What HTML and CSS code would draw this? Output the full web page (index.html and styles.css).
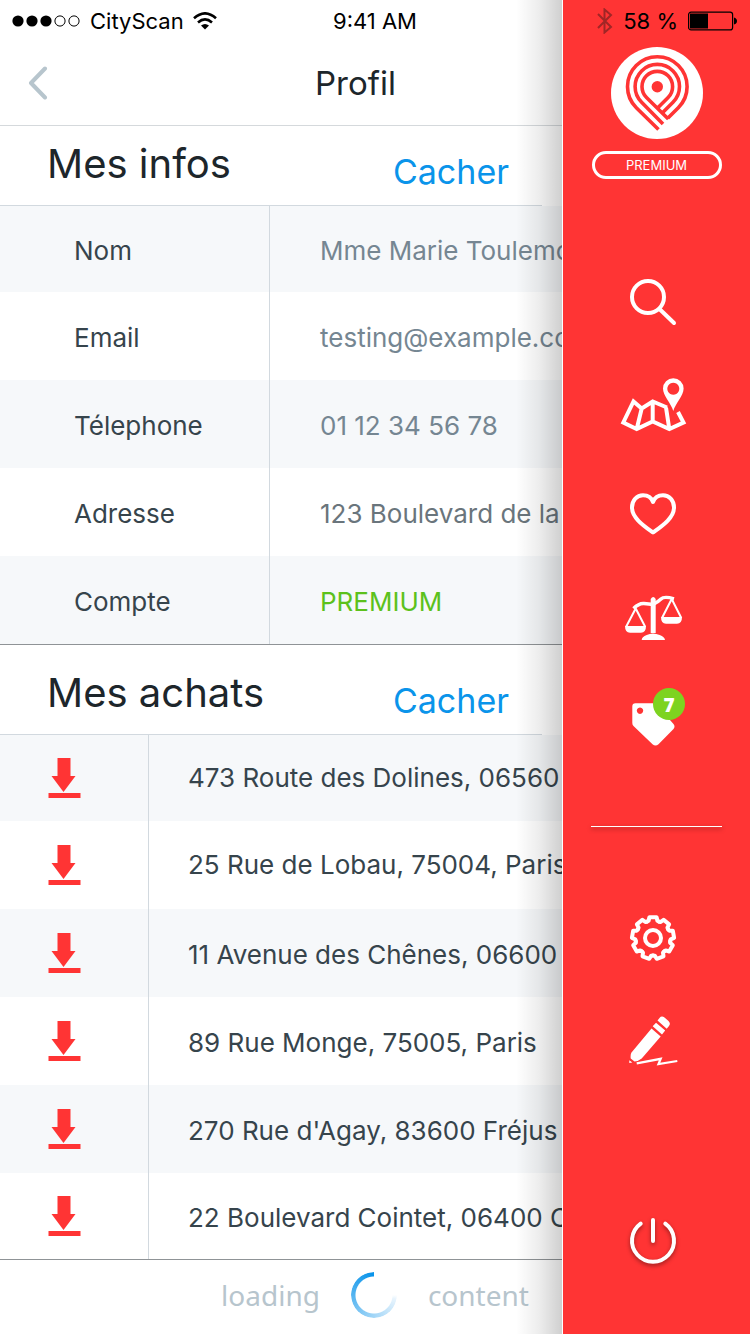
FILE: index.html
```html
<!DOCTYPE html>
<html lang="fr">
<head>
<meta charset="utf-8">
<meta name="viewport" content="width=device-width, initial-scale=1">
<title>CityScan – Profil</title>
<link rel="stylesheet" href="styles.css">
</head>
<body>
<svg class="defs" aria-hidden="true">
  <symbol id="download" viewBox="0 0 32 40"><path fill="#ff3434" d="M9 0h13v18h5L15 34 3 18h6zM0 35h32v5H0z"/></symbol>
  <path id="tooth" d="M-6 -16.4L-4.4 -17.2L-3.6 -20.8H3.6L4.4 -17.2L6 -16.4"/>
</svg>
<div class="app">
  <div class="status">
    <div class="status-left">
      <svg width="69" height="12" viewBox="0 0 69 12"><circle cx="6" cy="6" r="5.6"/><circle cx="20" cy="6" r="5.6"/><circle cx="34" cy="6" r="5.6"/><g fill="none" stroke="#000"><circle cx="48" cy="6" r="5.1"/><circle cx="62" cy="6" r="5.1"/></g></svg>
      <span>CityScan</span>
      <svg width="24" height="18" viewBox="0 0 24 18"><g fill="none" stroke="#000" stroke-width="2.6"><path d="M1 6.3Q12 -3.6 23 6.3"/><path d="M5 10.5Q12 4.4 19 10.5"/></g><path d="M8 13.5Q12 10.4 16 13.5L12 17.6z"/></svg>
    </div>
    <span>9:41 AM</span>
    <div class="status-right">
      <svg width="16" height="26" viewBox="0 0 16 26"><path d="M1 6l13 13-6.500 5.500V1.500L14 7 1 20" fill="none" stroke="#a02626" stroke-width="2"/></svg>
      <span>58 %</span>
      <svg width="50" height="20" viewBox="0 0 50 20"><rect x=".6" y="1.100" width="44" height="17.800" rx="2.500" fill="none" stroke="#000" stroke-width="1.200"/><path d="M2 2.500h18v15H2zM46 6.500q3 1 3 3.500t-3 3.500z"/></svg>
    </div>
  </div>

  <main class="content">
    <header class="topbar">
      <button class="back" aria-label="Retour"><svg width="20" height="34" viewBox="0 0 20 34"><path d="M17 2.500L3 17 17 31.500" fill="none" stroke="#b7c5cd" stroke-width="4" stroke-linecap="round" stroke-linejoin="round"/></svg></button>
      <h1>Profil</h1>
    </header>

    <section>
      <div class="section-head first"><h2>Mes infos</h2><button class="toggle">Cacher</button></div>
      <table class="infos">
        <tbody>
          <tr><th scope="row">Nom</th><td>Mme Marie Toulemonde</td></tr>
          <tr><th scope="row">Email</th><td>testing@example.com</td></tr>
          <tr><th scope="row">Télephone</th><td>01 12 34 56 78</td></tr>
          <tr><th scope="row">Adresse</th><td class="grey">123 Boulevard de la</td></tr>
          <tr><th scope="row">Compte</th><td class="premium">PREMIUM</td></tr>
        </tbody>
      </table>
    </section>

    <section>
      <div class="section-head"><h2>Mes achats</h2><button class="toggle">Cacher</button></div>
      <table class="achats">
        <tbody>
          <tr><th><button aria-label="Télécharger"><svg><use href="#download"/></svg></button></th><td>473 Route des Dolines, 06560</td></tr>
          <tr><th><button aria-label="Télécharger"><svg><use href="#download"/></svg></button></th><td>25 Rue de Lobau, 75004, Paris</td></tr>
          <tr><th><button aria-label="Télécharger"><svg><use href="#download"/></svg></button></th><td>11 Avenue des Chênes, 06600</td></tr>
          <tr><th><button aria-label="Télécharger"><svg><use href="#download"/></svg></button></th><td>89 Rue Monge, 75005, Paris</td></tr>
          <tr><th><button aria-label="Télécharger"><svg><use href="#download"/></svg></button></th><td>270 Rue d'Agay, 83600 Fréjus</td></tr>
          <tr><th><button aria-label="Télécharger"><svg><use href="#download"/></svg></button></th><td>22 Boulevard Cointet, 06400 C</td></tr>
        </tbody>
      </table>
    </section>

    <footer class="loading"><span>loading</span><span class="spinner"></span><span>content</span></footer>
  </main>

  <aside class="sidebar">
    <svg class="logo" viewBox="0 0 92 92">
      <circle cx="46" cy="46" r="46" fill="#fff"/>
      <circle cx="46.300" cy="39.700" r="5.700" fill="#ff3434"/>
      <g fill="none" stroke="#ff3434" stroke-width="3.600">
        <path d="M47.500 82.500L25.300 60.700A29.800 29.800 0 1 1 67.300 60.700L56.700 71.300"/>
        <path d="M52 77L30.600 55.300A22.200 22.200 0 1 1 62 55.300L51.500 65.800"/>
        <path d="M57.300 72L35.500 50.500A15.300 15.300 0 1 1 57.100 50.500L46.300 61.300"/>
      </g>
    </svg>
    <span class="plan">PREMIUM</span>
    <nav class="menu">
      <a href="#" aria-label="Rechercher"><svg viewBox="0 0 72 72"><g fill="none" stroke="#fff" stroke-width="4" stroke-linecap="round"><circle cx="31" cy="31" r="16"/><path d="M43 43.500L57 57"/></g></svg></a>
      <a href="#" aria-label="Carte"><svg viewBox="0 0 72 72"><path d="M50 35.500L35.700 29.500 24.700 36.500 16.500 29.500 6.300 50.500 19.700 57 35.700 49.500 52.300 57 66.500 50.500 61 40M24.700 36.500L19.700 57M35.700 29.500V49.500M49 35.500L52.300 57" fill="none" stroke="#fff" stroke-width="4"/><path fill="#fff" stroke="#ff3434" stroke-width="2" paint-order="stroke" fill-rule="evenodd" d="M56.300 39C54 31 46 24 46 16.500a10.300 10.300 0 0 1 20.600 0C66.600 24 58.600 31 56.300 39zM56.300 10.700a6 6 0 1 0 .01 0z"/></svg></a>
      <a href="#" aria-label="Favoris"><svg viewBox="0 0 72 72"><path d="M36 54.500C27 48 15 40 15 29.500C15 22 20 17.300 26 17.300C31 17.300 34.500 20 36 24C37.500 20 41 17.300 46 17.300C52 17.300 57 22 57 29.500C57 40 45 48 36 54.500z" fill="none" stroke="#fff" stroke-width="4" stroke-linejoin="round"/></svg></a>
      <a href="#" aria-label="Comparer"><svg viewBox="0 0 72 72"><path fill="#fff" d="M33.700 15q2.500-4 5 0v34h-5zM24.700 56q0-3 5-5 6-3 13 0 5 2 5.300 5zM8 42h21q0 6.700-5 6.700H13Q8 48.700 8 42zM44 33h21q0 6.700-5 6.700H49Q44 39.700 44 33z"/><g fill="none" stroke="#fff"><path stroke-width="3.400" d="M16.500 24.500Q22 19 27 19.500T36 20.500Q41 18 44 15T57 14.800"/><path stroke-width="2" d="M9 43L18.700 24.500 28.300 43M45 34L54.700 15 64.300 34"/></g></svg></a>
      <a href="#" aria-label="Achats"><svg viewBox="0 0 72 72"><path fill="#fff" fill-rule="evenodd" d="M18.500 13.300H36q2 0 3.500 1.500L56.500 34q2 2.500 0 5L41.500 54.300q-3 2.500-6 0L16.500 36q-1.200-1.200-1.200-3V16.500q0-3.200 3.200-3.200zM23 17.500a3.200 3.200 0 1 0 .01 0z"/></svg><span class="badge">7</span></a>
      <hr>
      <a href="#" aria-label="Réglages"><svg viewBox="0 0 72 72"><g transform="translate(36 36)" fill="none" stroke="#fff" stroke-width="4" stroke-linejoin="round" stroke-linecap="round"><circle r="8"/><use href="#tooth"/><use href="#tooth" transform="rotate(40)"/><use href="#tooth" transform="rotate(80)"/><use href="#tooth" transform="rotate(120)"/><use href="#tooth" transform="rotate(160)"/><use href="#tooth" transform="rotate(200)"/><use href="#tooth" transform="rotate(240)"/><use href="#tooth" transform="rotate(280)"/><use href="#tooth" transform="rotate(320)"/></g></svg></a>
      <a href="#" aria-label="Modifier"><svg viewBox="0 0 72 72"><path fill="#fff" d="M34.500 20.500L43.700 28.500 24.700 50.500Q21 53.500 17.500 53.500L13.700 50.500Q13.300 47 14.300 44.700zM35.700 18.300L39 14.700 48.200 22.600 45 26.500zM40.500 12.500L42.500 10Q44.500 7.500 47.500 9.500L51.500 13Q54 15.500 52 18L49.700 20.700zM12.300 52.300l3 2.200-3 .6z"/><path d="M19.700 55.300L43.700 50.800 41.500 56 60.300 53" fill="none" stroke="#fff" stroke-width="2.200"/></svg></a>
      <a href="#" class="power" aria-label="Déconnexion"><svg viewBox="0 0 72 72"><path d="M23.700 18.700A21 21 0 1 0 48.300 18.700M36 15V36" fill="none" stroke="#fff" stroke-width="4" stroke-linecap="round"/></svg></a>
    </nav>
  </aside>
</div>
</body>
</html>
```
FILE: styles.css
```css
* { box-sizing: border-box; }

body {
  margin: 0;
  background: #fff;
  color: #1d262b;
  font-family: Inter, "Liberation Sans", sans-serif;
}

button {
  padding: 0;
  border: 0;
  background: none;
  font: inherit;
  color: inherit;
  cursor: pointer;
}

svg { display: block; flex: none; }
.defs { position: absolute; width: 0; height: 0; }

.app {
  display: grid;
  grid-template-columns: minmax(0, 1fr) 187px;
  grid-template-rows: 40px auto;
  min-height: 100vh;
}

/* Status bar */
.status {
  grid-area: 1 / 1 / 2 / 3;
  z-index: 2;
  display: grid;
  grid-template-columns: 1fr auto 1fr;
  align-items: center;
  padding: 2px 12px 0;
  color: #000;
  font-size: 22px;
  line-height: 28px;
}
.status-left, .status-right { display: flex; align-items: center; gap: 9px; }
.status-right { justify-content: flex-end; gap: 10px; }

.content {
  grid-area: 1 / 1 / 3 / 2;
  display: flex;
  flex-direction: column;
  overflow: hidden;
  padding-top: 40px;
}

.topbar {
  display: flex;
  align-items: center;
  height: 86px;
  border-bottom: 1px solid #d5d9dc;
}
.back { width: 148px; padding-left: 28px; }
h1, h2 { margin: 0; font-weight: 400; }
h1 { flex: 1; font-size: 33px; line-height: 44px; text-align: center; }

/* Sections */
.section-head {
  display: flex;
  justify-content: space-between;
  height: 90px;
  padding: 20px 54px 0 47px;
  background: linear-gradient(#d2d9df, #d2d9df) 0 100% / calc(100% - 21px) 1px no-repeat;
}
.section-head.first { height: 80px; padding-top: 10px; }
h2 { font-size: 40px; line-height: 56px; }
.toggle { margin-top: 14px; align-self: flex-start; color: #0a94ea; font-size: 34px; line-height: 44px; }

table {
  width: 100%;
  table-layout: fixed;
  border-spacing: 0;
  border-bottom: 1px solid #8f9396;
  font-size: 26px;
  line-height: 36px;
  color: #36444c;
}
tr { height: 88px; }
tr:first-child { height: 86px; }
tr:nth-child(odd) { background: #f6f8fa; }
th, td { padding: 0; text-align: left; font-weight: 400; white-space: nowrap; }
td { border-left: 1px solid #d2d9df; }
.infos th { width: 269px; padding: 3px 0 0 74px; }
.infos td { padding: 3px 0 0 50px; color: #758692; }
.infos .grey { color: #6a757c; }
.infos .premium { color: #5cc11c; }
.achats th { width: 148px; padding-left: 48px; }
.achats td { padding-left: 39px; }
.achats tr:nth-child(n+3) td { padding-top: 3px; }
.achats tr:last-child { height: 86px; }
.achats button { display: block; }
.achats svg { width: 33px; height: 40px; }

.loading {
  flex: 1;
  display: flex;
  align-items: center;
  justify-content: center;
  gap: 31px;
  min-height: 70px;
  padding: 0 0 4px 187px;
  color: #b7c5cd;
  font: 28px/40px "Noto Sans", sans-serif;
}
.spinner {
  width: 46px;
  height: 46px;
  border-radius: 50%;
  background: conic-gradient(#fff 0 90deg, #e8f4fd 100deg, #0a94ea 355deg, #0a94ea);
  -webkit-mask: radial-gradient(circle, transparent 18px, #000 19px);
  mask: radial-gradient(circle, transparent 18px, #000 19px);
}

/* Sidebar */
.sidebar {
  grid-area: 1 / 2 / 3 / 3;
  position: relative;
  display: flex;
  flex-direction: column;
  align-items: center;
  padding-top: 47px;
  background: #ff3434;
}
.sidebar::before {
  content: "";
  position: absolute;
  top: 0;
  bottom: 0;
  right: 100%;
  width: 46px;
  border-right: 1px solid #fff;
  background: linear-gradient(to right, rgba(0, 0, 0, 0), rgba(0, 0, 0, .07) 50%, rgba(0, 0, 0, .19));
  background-clip: padding-box;
}
.logo { width: 92px; height: 92px; }
.plan {
  width: 130px;
  margin-top: 12px;
  padding-top: 1px;
  border: 3px solid #fff;
  border-radius: 14px;
  color: #fff;
  font-size: 13px;
  line-height: 21px;
  text-align: center;
}
.menu {
  flex: 1;
  display: flex;
  flex-direction: column;
  align-self: stretch;
  padding: 70px 0 40px;
}
.menu a {
  position: relative;
  display: block;
  width: 72px;
  margin-left: 54px;
  padding: 17px 0;
}
.menu svg { width: 72px; height: 72px; }
.menu hr {
  width: 131px;
  height: 1px;
  margin: 47px auto 58px;
  border: 0;
  background: #fff;
  box-shadow: 0 2px 4px rgba(0, 0, 0, .5);
}
.menu .power { margin-top: auto; filter: drop-shadow(0 2px 2px rgba(0, 0, 0, .4)); }
.badge {
  position: absolute;
  top: 15px;
  left: 36px;
  width: 32px;
  height: 32px;
  border-radius: 50%;
  background: #7dd320;
  color: #fff;
  font: 900 19px/35px "Noto Sans", sans-serif;
  text-align: center;
}
```
